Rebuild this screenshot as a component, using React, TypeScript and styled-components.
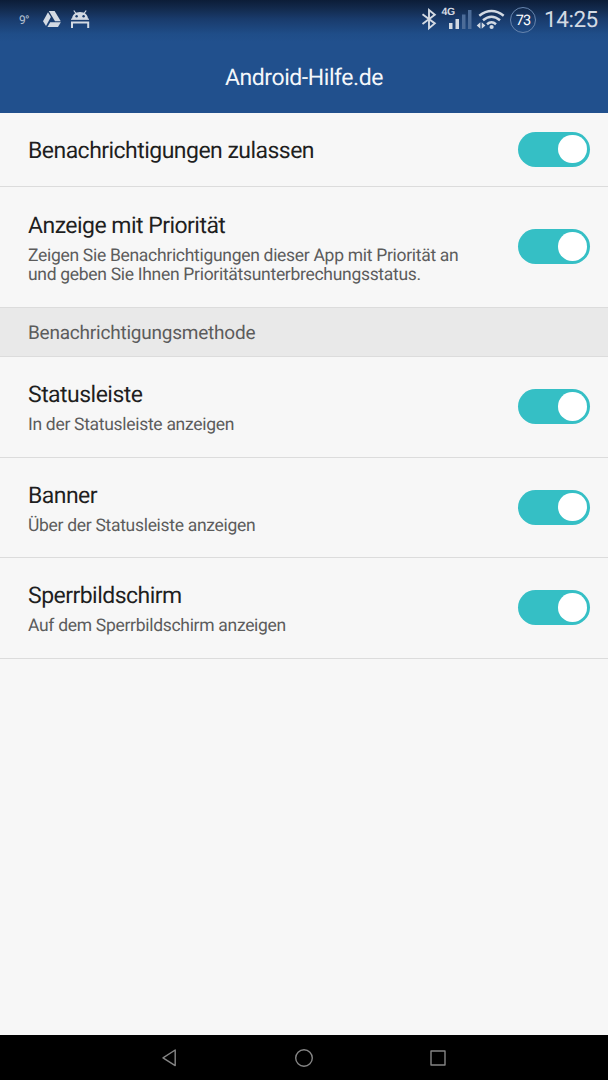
import React from "react";
import styled, { createGlobalStyle } from "styled-components";

const GlobalStyle = createGlobalStyle`
  * { box-sizing: border-box; }
  body { margin: 0; background: #f7f7f7; font-family: Roboto, sans-serif; text-rendering: geometricPrecision; }
`;

const Screen = styled.div`
  width: 608px;
  height: 1080px;
  display: flex;
  flex-direction: column;
  overflow: hidden;
  background: #f7f7f7;
`;

const Header = styled.header`
  flex: none;
  height: 113px;
  background: linear-gradient(#0c1d37 0, #12294b 8px, #193b6c 19px, #1f4d88 34px, #21508d 42px);
`;

const StatusBar = styled.div`
  height: 40px;
  display: flex;
  align-items: center;
  padding: 0 10px 0 19px;
  color: #d3dae3;
`;

const Temperature = styled.span`
  width: 24px;
  font-size: 12px;
  letter-spacing: -0.7px;
  line-height: 40px;
  color: #b5c1d1;
`;

const StatusIcons = styled.svg`
  display: block;
  flex: none;
`;

const Spacer = styled.div`
  flex: 1;
`;

const NetworkLabel = styled.text`
  font: 700 10.5px "Liberation Sans", sans-serif;
  letter-spacing: -0.3px;
  fill: #d3dae3;
`;

const Battery = styled.div`
  width: 26px;
  height: 26px;
  display: flex;
  align-items: center;
  justify-content: center;
  border: 1.5px solid #6785ae;
  border-radius: 50%;
  font-size: 14.5px;
  letter-spacing: -0.8px;
  color: #fff;
`;

const Clock = styled.span`
  width: 54px;
  margin-left: 8px;
  padding-top: 1px;
  font-size: 22.5px;
  letter-spacing: -0.45px;
  line-height: 41px;
  white-space: nowrap;
`;

const Title = styled.h1`
  margin: 0;
  height: 73px;
  line-height: 75px;
  text-align: center;
  font-size: 23px;
  letter-spacing: -0.44px;
  font-weight: 400;
  color: #f4f7fa;
`;

const Content = styled.main`
  flex: 1;
`;

const Row = styled.div<{ $height: number }>`
  height: ${(p) => p.$height}px;
  display: flex;
  align-items: center;
  justify-content: space-between;
  padding: 0 18.5px 0 28px;
  border-bottom: 1px solid #dcdcdc;
`;

const Labels = styled.div`
  padding-top: 3.7px;
`;

const RowTitle = styled.div`
  font-size: 23px;
  letter-spacing: -0.53px;
  line-height: 28px;
  color: #1f1f1f;
  white-space: nowrap;
`;

const Description = styled.div`
  margin-top: 7px;
  font-size: 17.5px;
  letter-spacing: -0.3px;
  line-height: 19.7px;
  color: #5c5c5c;
  white-space: pre;
`;

const Section = styled.div`
  height: 49px;
  padding-left: 28px;
  border-bottom: 1px solid #dcdcdc;
  background: #e9e9e9;
  font-size: 19px;
  letter-spacing: -0.22px;
  line-height: 50px;
  color: #5c5c5c;
`;

const Switch = styled.button`
  flex: none;
  width: 71.5px;
  height: 35px;
  margin-bottom: 1px;
  padding: 0 3px 0 0;
  display: flex;
  align-items: center;
  justify-content: flex-end;
  border: 0;
  border-radius: 18px;
  background: #35bfc5;
`;

const Knob = styled.span`
  width: 28.5px;
  height: 28.5px;
  border-radius: 50%;
  background: #fff;
`;

const NavBar = styled.nav`
  flex: none;
  height: 45px;
  display: flex;
  align-items: center;
  justify-content: center;
  gap: 110px;
  background: #000;
`;

type SettingProps = { title: string; text?: string; height: number };

function Setting({ title, text, height }: SettingProps) {
  return (
    <Row $height={height}>
      <Labels>
        <RowTitle>{title}</RowTitle>
        {text && <Description>{text}</Description>}
      </Labels>
      <Switch role="switch" aria-checked="true" aria-label={title}>
        <Knob />
      </Switch>
    </Row>
  );
}

export default function App() {
  return (
    <Screen>
      <GlobalStyle />
      <Header>
        <StatusBar>
          <Temperature>9°</Temperature>
          <StatusIcons width="48" height="40" viewBox="43 0 48 40">
            <g fill="#d3dae3">
              <path d="M48.8 11h5.8l6.2 10.2H55z" />
              <path d="M48 12.2l2.9 4.9-4.9 9-3-4.8z" />
              <path d="M50.2 22.2h10.6L58 27H47.4z" />
              <path d="M72 19.3C72 14.8 75.3 12 80 12s8 2.8 8 7.3z" />
            </g>
            <g fill="none" stroke="#d3dae3">
              <path strokeWidth="1.2" d="M76 13.5l-2.2-3M84 13.5l2.2-3" />
              <path strokeWidth="2" d="M72 28v-5.5h16.2V28" />
            </g>
            <path stroke="#d3dae3" strokeWidth="1.2" d="M71 19.2h18" />
            <circle cx="76.6" cy="16.2" r="1.2" fill="#193b6c" />
            <circle cx="83.6" cy="16.2" r="1.2" fill="#193b6c" />
          </StatusIcons>
          <Spacer />
          <StatusIcons width="90" height="40" viewBox="420 0 90 40">
            <path
              fill="none"
              stroke="#d3dae3"
              strokeWidth="1.9"
              d="M422.5 14.2l12.3 9.2-5.8 4.8V10l5.8 4.8-12.3 9.2"
            />
            <NetworkLabel x="441.5" y="15">4G</NetworkLabel>
            <path fill="#d3dae3" d="M449 23h3.5v6H449zM455.5 19h3.5v10h-3.5z" />
            <path fill="#4c6c98" d="M462 14.5h3.5V29H462zM468 10h3.5v19H468z" />
            <g fill="none" stroke="#d3dae3" strokeWidth="2.5">
              <path d="M479.3 15.8q12.2-9.6 24.4 0" />
              <path d="M483 20.2q8.5-7 17 0" />
              <path d="M487 24.2q4.5-3.8 9 0" />
            </g>
            <circle cx="491.6" cy="27" r="2.1" fill="#d3dae3" />
            <path fill="#d3dae3" d="M480.4 22.2v6.6l-3.7-3.3zM481.7 22.2v6.6l3.7-3.3z" />
          </StatusIcons>
          <Battery>73</Battery>
          <Clock>14:25</Clock>
        </StatusBar>
        <Title>Android-Hilfe.de</Title>
      </Header>
      <Content>
        <Setting title="Benachrichtigungen zulassen" height={74} />
        <Setting
          title="Anzeige mit Priorität"
          text={"Zeigen Sie Benachrichtigungen dieser App mit Priorität an\nund geben Sie Ihnen Prioritätsunterbrechungsstatus."}
          height={121}
        />
        <Section>Benachrichtigungsmethode</Section>
        <Setting title="Statusleiste" text="In der Statusleiste anzeigen" height={101} />
        <Setting title="Banner" text="Über der Statusleiste anzeigen" height={100} />
        <Setting title="Sperrbildschirm" text="Auf dem Sperrbildschirm anzeigen" height={101} />
      </Content>
      <NavBar>
        <svg width="24" height="24" viewBox="0 0 24 24" fill="none" stroke="#858585" strokeWidth="1.4" strokeLinejoin="round">
          <path d="M17.2 4v15.6L5 11.8z" />
        </svg>
        <svg width="24" height="24" viewBox="0 0 24 24" fill="none" stroke="#858585" strokeWidth="1.4">
          <circle cx="12" cy="12" r="8.3" />
        </svg>
        <svg width="24" height="24" viewBox="0 0 24 24" fill="none" stroke="#858585" strokeWidth="1.4" strokeLinejoin="round">
          <path d="M5 5h14v14H5z" />
        </svg>
      </NavBar>
    </Screen>
  );
}
